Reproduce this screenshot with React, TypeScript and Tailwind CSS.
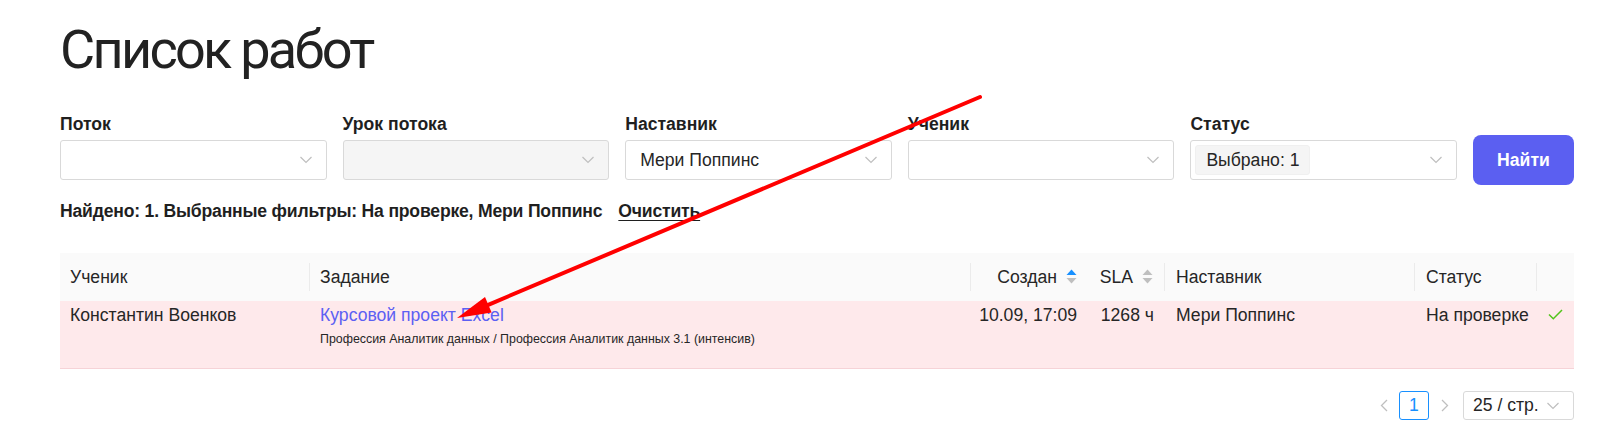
import React from 'react';

const fields = [
  { label: 'Поток', value: '', disabled: false, tag: false },
  { label: 'Урок потока', value: '', disabled: true, tag: false },
  { label: 'Наставник', value: 'Мери Поппинс', disabled: false, tag: false },
  { label: 'Ученик', value: '', disabled: false, tag: false },
  { label: 'Статус', value: 'Выбрано: 1', disabled: false, tag: true },
];

function Chevron({ className = '' }: { className?: string }) {
  return (
    <svg className={className} width="12" height="8" viewBox="0 0 12 8" fill="none">
      <path d="M0.5 1 L6 6.5 L11.5 1" stroke="#bfbfbf" strokeWidth="1.2" />
    </svg>
  );
}

function SortIcon({ active }: { active: boolean }) {
  return (
    <svg width="11" height="17" viewBox="0 0 11 17" className="ml-[9px]">
      <path d="M0.5 7 L5.5 1.5 L10.5 7 Z" fill={active ? '#1890ff' : '#bfbfbf'} />
      <path d="M0.5 10 L5.5 15.5 L10.5 10 Z" fill="#bfbfbf" />
    </svg>
  );
}

function Divider() {
  return <span className="h-[28px] w-px shrink-0 bg-[#ebebeb]" />;
}

// стрелка-аннотация поверх страницы
function Arrow() {
  const tip = { x: 457, y: 318 };
  const tail = { x: 980, y: 97 };
  const dx = tip.x - tail.x;
  const dy = tip.y - tail.y;
  const len = Math.hypot(dx, dy);
  const ux = dx / len;
  const uy = dy / len;
  const headLen = 34;
  const half = 8.5;
  const bx = tip.x - ux * headLen;
  const by = tip.y - uy * headLen;
  const p1 = `${bx - uy * half},${by + ux * half}`;
  const p2 = `${bx + uy * half},${by - ux * half}`;
  return (
    <svg className="pointer-events-none absolute left-0 top-0" width="1621" height="444">
      <line
        x1={tail.x}
        y1={tail.y}
        x2={bx + ux * 2}
        y2={by + uy * 2}
        stroke="#ff0000"
        strokeWidth="4"
        strokeLinecap="round"
      />
      <polygon points={`${tip.x},${tip.y} ${p1} ${p2}`} fill="#ff0000" />
    </svg>
  );
}

export default function App() {
  return (
    <div className="relative h-[444px] overflow-hidden bg-white font-['Liberation_Sans',Arial,sans-serif] text-[17.6px] text-[#262626]">
      <div className="ml-[60px] w-[1514px] pt-[18px]">
        <h1 className="font-['Roboto',sans-serif] text-[54px] font-normal leading-[64px] tracking-[-2.7px] text-[#222]">
          Список работ
        </h1>

        <div className="mt-[30px] flex items-start gap-4">
          {fields.map((f) => (
            <div key={f.label} className="flex flex-1 flex-col">
              <label className="text-[17.6px] font-bold leading-[24px] text-[#1f1f1f]">{f.label}</label>
              <div
                className={`mt-[4px] flex h-[40px] items-center justify-between rounded-[3px] border border-[#d9d9d9] pr-[14px] ${
                  f.disabled ? 'bg-[#f5f5f5]' : 'bg-white'
                } ${f.tag ? 'pl-[4px]' : 'pl-[14px]'}`}
              >
                {f.tag ? (
                  <span className="flex h-[30px] items-center rounded-[3px] border border-[#f0f0f0] bg-[#f5f5f5] px-[10px]">
                    {f.value}
                  </span>
                ) : (
                  <span>{f.value}</span>
                )}
                <Chevron />
              </div>
            </div>
          ))}
          <button
            type="button"
            className="mt-[23px] h-[50px] w-[101px] shrink-0 rounded-[8px] bg-[#5b5ff1] font-bold text-white"
          >
            Найти
          </button>
        </div>

        <div className="mt-[14px] flex items-center leading-[24px]">
          <span className="font-bold tracking-[-0.2px] text-[#1f1f1f]">
            Найдено: 1. Выбранные фильтры: На проверке, Мери Поппинс
          </span>
          <button
            type="button"
            className="ml-[16px] font-bold tracking-[-0.2px] text-[#1f1f1f] underline underline-offset-[3px]"
          >
            Очистить
          </button>
        </div>

        <div className="mt-[30px]">
          <div className="grid h-[48px] grid-cols-[249px_661px_118px_76px_250px_122px_1fr] items-center bg-[#fafafa]">
            <div className="pl-[10px]">Ученик</div>
            <div className="flex items-center">
              <Divider />
              <span className="pl-[10px]">Задание</span>
            </div>
            <div className="flex items-center">
              <Divider />
              <span className="ml-auto flex items-center pr-[11px]">
                Создан
                <SortIcon active />
              </span>
            </div>
            <div className="flex items-center justify-end pr-[11px]">
              SLA
              <SortIcon active={false} />
            </div>
            <div className="flex items-center">
              <Divider />
              <span className="pl-[11px]">Наставник</span>
            </div>
            <div className="flex items-center">
              <Divider />
              <span className="pl-[11px]">Статус</span>
            </div>
            <div className="flex items-center">
              <Divider />
            </div>
          </div>

          <div className="grid h-[68px] grid-cols-[249px_661px_118px_76px_250px_122px_1fr] border-b border-[#f6d3d7] bg-[#fee9eb] pt-[2px] leading-[24px]">
            <div className="pl-[10px]">Константин Военков</div>
            <div className="pl-[11px]">
              <a className="text-[#5c60f3]">Курсовой проект Excel</a>
              <div className="mt-[3px] text-[12.4px] leading-[18px] text-[#262626]">
                Профессия Аналитик данных / Профессия Аналитик данных 3.1 (интенсив)
              </div>
            </div>
            <div className="pr-[11px] text-right">10.09, 17:09</div>
            <div className="pr-[10px] text-right">1268 ч</div>
            <div className="pl-[12px]">Мери Поппинс</div>
            <div className="pl-[12px]">На проверке</div>
            <div className="flex justify-center pt-[6px]">
              <svg width="15" height="11" viewBox="0 0 15 11" fill="none">
                <path d="M1 5.5 L5.3 9.8 L14 1" stroke="#52c41a" strokeWidth="1.5" />
              </svg>
            </div>
          </div>
        </div>

        <div className="mt-[22px] flex items-center justify-end">
          <svg width="8" height="13" viewBox="0 0 8 13" fill="none" className="mr-[11px]">
            <path d="M7 1 L1.5 6.5 L7 12" stroke="#bfbfbf" strokeWidth="1.3" />
          </svg>
          <div className="flex h-[29px] w-[30px] items-center justify-center rounded-[3px] border border-[#1890ff] text-[#1890ff]">
            1
          </div>
          <svg width="8" height="13" viewBox="0 0 8 13" fill="none" className="ml-[12px] mr-[14px]">
            <path d="M1 1 L6.5 6.5 L1 12" stroke="#bfbfbf" strokeWidth="1.3" />
          </svg>
          <div className="flex h-[29px] w-[111px] items-center justify-between rounded-[3px] border border-[#d9d9d9] pl-[9px] pr-[14px]">
            <span>25 / стр.</span>
            <Chevron />
          </div>
        </div>
      </div>
      <Arrow />
    </div>
  );
}
